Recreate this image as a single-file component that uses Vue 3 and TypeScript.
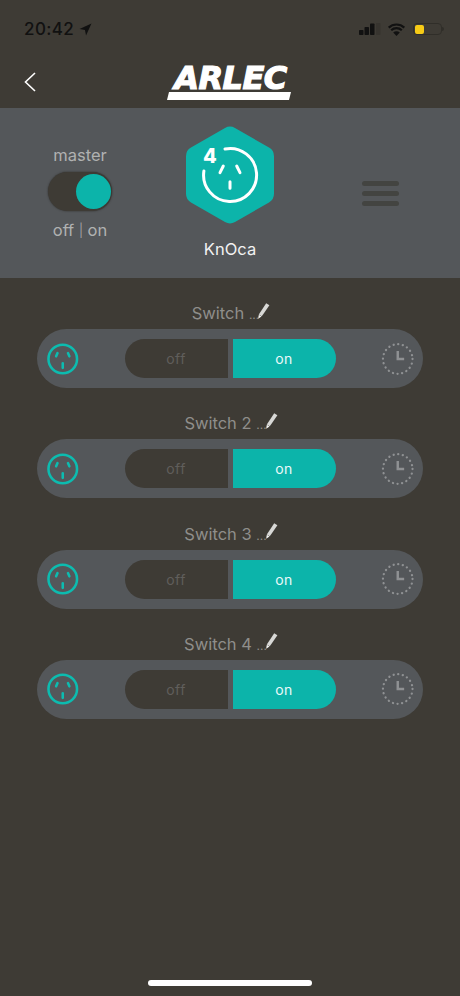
<script setup lang="ts">
const rows = ['Switch ', 'Switch 2 ', 'Switch 3 ', 'Switch 4 ']
</script>

<template>
  <div class="page">
    <header class="status">
      <div class="time">
        <span>20:42</span>
        <svg width="13" height="13" viewBox="0 0 12 12"><path d="M11.5.5 0.5 5.5 5.5 6.500 6.500 11.500Z" fill="#111" /></svg>
      </div>
      <div class="sys">
        <svg width="22" height="12" viewBox="0 0 22 12">
          <rect x="0" y="7" width="4.500" height="5" rx=".8" fill="#111" />
          <rect x="5.500" y="4" width="4.500" height="8" rx=".8" fill="#111" />
          <rect x="11" y="0.500" width="4.500" height="11.500" rx=".8" fill="#111" />
          <rect x="17" y="0" width="4.500" height="12" rx=".8" fill="#37342f" />
        </svg>
        <svg width="19" height="13" viewBox="0 0 18 13">
          <path d="M1.200 4.600a11.400 11.400 0 0 1 15.600 0M3.700 7.200a7.800 7.800 0 0 1 10.600 0" fill="none" stroke="#111" stroke-width="2.200" />
          <path d="M9 13 5.700 9.600a4.700 4.700 0 0 1 6.600 0Z" fill="#111" />
        </svg>
        <div class="batt"><i></i><b></b></div>
      </div>
    </header>

    <nav class="nav">
      <svg class="back" width="12" height="20" viewBox="0 0 12 20"><path d="M11 1 1.500 10 11 19" fill="none" stroke="#fff" stroke-width="1.600" /></svg>
      <div class="logo">
        <span>ARLEC</span>
        <i></i>
      </div>
    </nav>

    <section class="panel">
      <div class="master">
        <div class="m-label">master</div>
        <div class="toggle"><i></i></div>
        <div class="m-label">off <small>|</small> on</div>
      </div>
      <div class="device">
        <svg width="90" height="98" viewBox="0 0 90 98">
          <path d="M40 2a10 10 0 0 1 10 0L84 21.500a10 10 0 0 1 5 8.700V67.800a10 10 0 0 1-5 8.700L50 96a10 10 0 0 1-10 0L6 76.500A10 10 0 0 1 1 67.800V30.200a10 10 0 0 1 5-8.700Z" fill="#0cb4aa" />
          <path d="M40 23A26.500 26.500 0 1 1 18.900 45" fill="none" stroke="#fff" stroke-width="3" stroke-linecap="round" />
          <path d="M38.300 40 35 46.700M51.700 40 55 46.700M45 55.700V62.300" fill="none" stroke="#fff" stroke-width="3" stroke-linecap="round" />
          <text x="18" y="37" class="hex-num">4</text>
        </svg>
        <div class="dev-name">KnOca</div>
      </div>
      <div class="menu"><i></i><i></i><i></i></div>
    </section>

    <main class="list">
      <div v-for="r in rows" :key="r" class="item">
        <div class="title">
          <span>{{ r }}<small>...</small></span>
          <svg width="13" height="18" viewBox="0 0 13 18">
            <path d="M9.200 1.200 12.400 3.200 4.800 14.300 1.800 12.400Z" fill="#d8d8d6" />
            <path d="M1.800 12.800 4.500 14.500 1.200 16.800Z" fill="#f2f2f0" />
          </svg>
        </div>
        <div class="pill">
          <svg class="socket" width="34" height="34" viewBox="0 0 34 34">
            <circle cx="17" cy="17" r="14.500" fill="none" stroke="#0cbcb0" stroke-width="2.600" />
            <path d="M11.700 11 10.300 14.300M22.300 11 23.700 14.300M17 21.300V26" fill="none" stroke="#0cbcb0" stroke-width="2.600" stroke-linecap="round" />
          </svg>
          <div class="seg">
            <div class="off">off</div>
            <div class="on">on</div>
          </div>
          <svg class="clock" width="34" height="34" viewBox="0 0 34 34">
            <circle cx="17" cy="17" r="15" fill="none" stroke="#8f9193" stroke-width="2.300" stroke-linecap="round" stroke-dasharray="0.100 4.612" />
            <path d="M17 9V17H23.500" fill="none" stroke="#8f9193" stroke-width="2.500" />
          </svg>
        </div>
      </div>
    </main>

    <div class="home-wrap"><div class="home"></div></div>
  </div>
</template>

<style scoped>
.page {
  width: 460px;
  height: 996px;
  background: #3e3b35;
  display: flex;
  flex-direction: column;
  font-family: Inter, "Noto Sans", sans-serif;
  overflow: hidden;
}
.status {
  height: 58px;
  display: flex;
  justify-content: space-between;
  align-items: center;
  padding: 0 18px 0 24px;
  box-sizing: border-box;
}
.time {
  display: flex;
  align-items: center;
  gap: 5px;
  color: #111;
  font-size: 17px;
  font-weight: 500;
  letter-spacing: 0.4px;
}
.sys {
  display: flex;
  align-items: center;
  gap: 6px;
}
.batt {
  width: 26px;
  height: 10px;
  margin-left: 1px;
  border: 1px solid #302e29;
  border-radius: 4px;
  padding: 0 0 0 1px;
  box-sizing: content-box;
  position: relative;
  display: flex;
  align-items: center;
}
.batt i {
  display: block;
  width: 9px;
  height: 9px;
  background: #f7cb16;
  border-radius: 2px;
}
.batt b {
  position: absolute;
  right: -3px;
  top: 3px;
  width: 2px;
  height: 4px;
  background: #302e29;
  border-radius: 0 2px 2px 0;
}
.nav {
  height: 50px;
  display: flex;
  align-items: center;
  justify-content: center;
  position: relative;
}
.back {
  position: absolute;
  left: 24px;
  top: 14px;
}
.logo {
  width: 128px;
  display: flex;
  flex-direction: column;
  align-items: center;
  margin-top: -2px;
  margin-left: 1px;
}
.logo span {
  font-family: "DejaVu Sans", sans-serif;
  font-weight: 700;
  font-style: italic;
  font-size: 32px;
  line-height: 26px;
  color: #fff;
  letter-spacing: -0.5px;
  -webkit-text-stroke: 1.200px #fff;
}
.logo i {
  display: block;
  width: 122px;
  height: 8px;
  margin-top: 1px;
  margin-left: -3px;
  background: #fff;
  transform: skewX(-14deg);
}
.panel {
  height: 170px;
  background: #54575a;
  display: flex;
  align-items: flex-start;
  position: relative;
}
.master {
  width: 160px;
  display: flex;
  flex-direction: column;
  align-items: center;
  padding-top: 37px;
}
.m-label {
  font-size: 16.500px;
  line-height: 20px;
  color: #b0b1b1;
}
.m-label small {
  font-size: 13px;
  font-weight: 300;
  vertical-align: 1px;
}
.toggle {
  width: 64px;
  height: 39px;
  margin: 7px 0 9px;
  border-radius: 20px;
  background: #3e3b35;
  box-shadow: 0 0 2px #2c2b29;
  display: flex;
  justify-content: flex-end;
  align-items: center;
  padding-right: 1px;
  box-sizing: border-box;
}
.toggle i {
  width: 35px;
  height: 35px;
  border-radius: 50%;
  background: #0cb4aa;
}
.device {
  width: 140px;
  display: flex;
  flex-direction: column;
  align-items: center;
  padding-top: 18px;
}
.hex-num {
  font-family: Inter, sans-serif;
  font-size: 20px;
  font-weight: 800;
  fill: #fff;
}
.dev-name {
  margin-top: 15px;
  color: #f2f2f2;
  font-size: 16.500px;
  line-height: 20px;
}
.menu {
  margin: 72.500px 0 0 62px;
  width: 37px;
  display: flex;
  flex-direction: column;
  gap: 5px;
}
.menu i {
  display: block;
  height: 5px;
  border-radius: 2.500px;
  background: #434441;
}
.list {
  flex: 1;
  display: flex;
  flex-direction: column;
  gap: 23.330px;
  padding: 23px 37px 0;
}
.item {
  display: flex;
  flex-direction: column;
  gap: 4px;
}
.title {
  height: 24px;
  display: flex;
  justify-content: center;
  align-items: center;
  color: #8f8e8b;
  font-size: 16.500px;
  padding-left: 2px;
}
.title small {
  font-size: 12px;
}
.title svg {
  margin-left: -2px;
  margin-top: -5px;
}
.pill {
  height: 59px;
  background: #54575a;
  border-radius: 30px;
  display: flex;
  align-items: center;
  padding: 0 9px 0 9px;
}
.seg {
  display: flex;
  margin-left: 45px;
  gap: 5px;
  height: 39px;
}
.off,
.on {
  width: 103px;
  display: flex;
  align-items: center;
  justify-content: center;
  font-size: 14px;
  letter-spacing: 0.5px;
}
.off {
  background: #3e3b35;
  color: #605e5b;
  border-radius: 20px 0 0 20px;
}
.on {
  background: #0cb4aa;
  color: #eafafa;
  border-radius: 0 20px 20px 0;
}
.clock {
  margin-left: 45px;
}
.home-wrap {
  height: 16px;
  display: flex;
  justify-content: center;
}
.home {
  width: 164px;
  height: 6px;
  border-radius: 3px;
  background: #fff;
}
</style>
